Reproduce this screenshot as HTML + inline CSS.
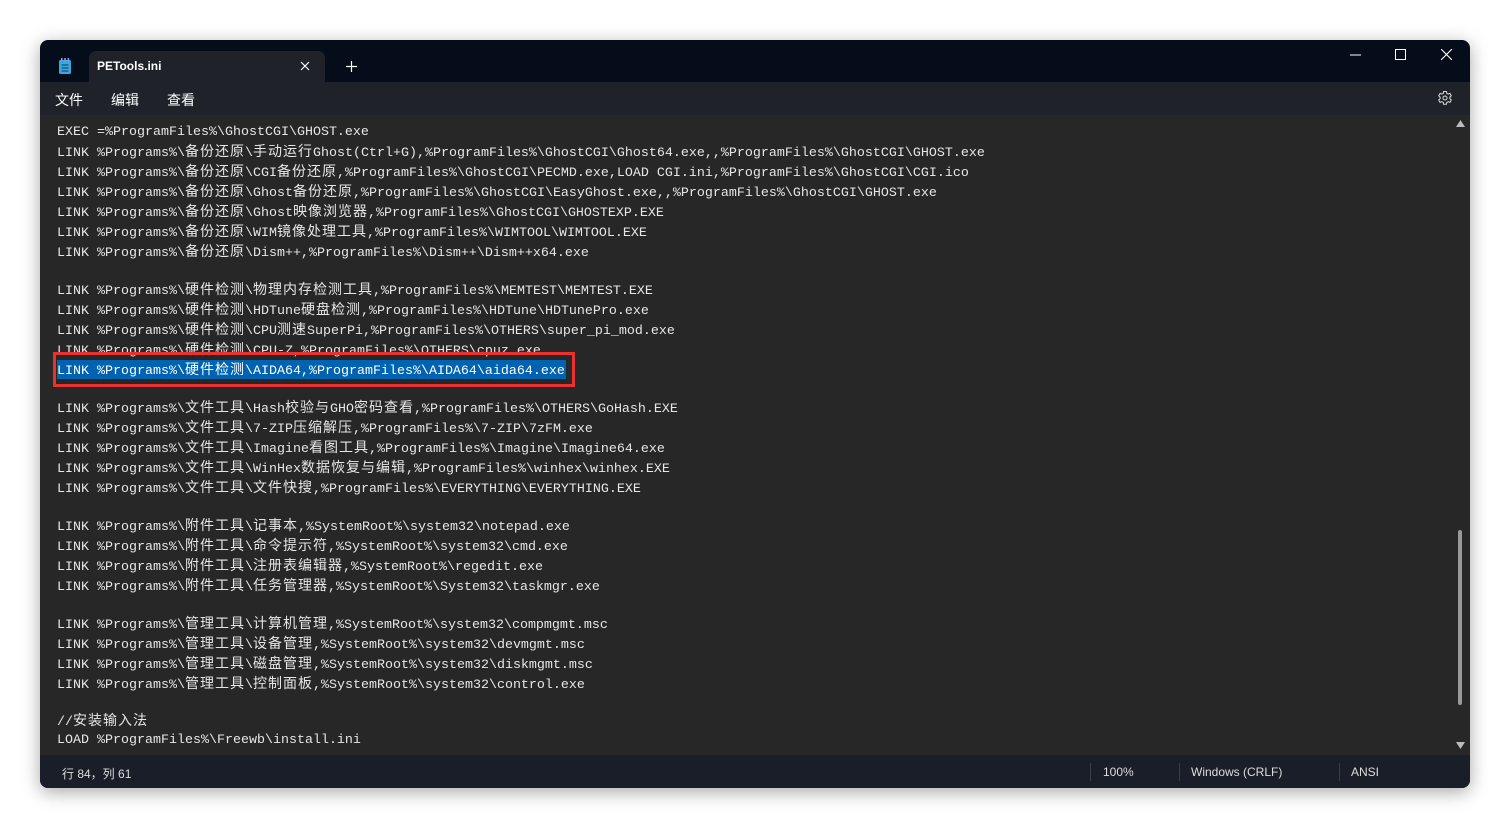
<!DOCTYPE html>
<html><head><meta charset="utf-8"><style>
*{margin:0;padding:0;box-sizing:border-box}
body{width:1510px;height:828px;background:#fff;position:relative;overflow:hidden;font-family:"Liberation Sans","Noto Sans CJK SC",sans-serif}
.win{position:absolute;left:40px;top:40px;width:1430px;height:748px;background:#050c1a;border-radius:8px;overflow:hidden;box-shadow:0 4px 18px rgba(0,0,0,.35)}
.tab{position:absolute;left:49px;top:11px;width:236px;height:31px;background:#1f2228;border-radius:7px 7px 0 0;color:#fff;font-size:12px;font-weight:bold}
.menu{position:absolute;left:0;top:42px;width:1430px;height:33px;background:#1f2228;color:#fff;font-size:14px}
.ed{position:absolute;left:0;top:75px;width:1430px;height:640px;background:#272727}
.status{position:absolute;left:0;top:715px;width:1430px;height:33px;background:#1a1e29;color:#ddd;font-size:12px}
.l{position:absolute;left:17px;height:20px;line-height:20px;font-family:"Liberation Mono",monospace;font-size:13.33px;color:#e6e6e6;white-space:pre}
.c{font-family:"Noto Sans CJK SC",sans-serif;font-size:14px;letter-spacing:1px}
.sep{position:absolute;top:8px;width:1px;height:18px;background:#3a3e48}
</style></head><body>
<div class="win">
 <svg style="position:absolute;left:18px;top:18px" width="14" height="17" viewBox="0 0 14 17"><rect x="1" y="2" width="12" height="14" rx="1.5" fill="#3aa7e0"/><rect x="3" y="0" width="1.5" height="3" fill="#8ad"/><rect x="6.3" y="0" width="1.5" height="3" fill="#8ad"/><rect x="9.6" y="0" width="1.5" height="3" fill="#8ad"/><path d="M3.5 7h7M3.5 10h7M3.5 13h7" stroke="#0b3a5c" stroke-width="1"/></svg>
 <div class="tab"><span style="position:absolute;left:8px;top:8px">PETools.ini</span>
  <svg style="position:absolute;left:211px;top:10px" width="10" height="10"><path d="M1 1L9 9M9 1L1 9" stroke="#fff" stroke-width="1.2"/></svg></div>
 <svg style="position:absolute;left:306px;top:21px" width="11" height="11"><path d="M5.5 0V11M0 5.5H11" stroke="#fff" stroke-width="1.2"/></svg>
 <svg style="position:absolute;left:1310px;top:14px" width="11" height="2"><path d="M0 1H11" stroke="#fff"/></svg>
 <svg style="position:absolute;left:1355px;top:9px" width="11" height="11"><rect x=".5" y=".5" width="10" height="10" fill="none" stroke="#fff"/></svg>
 <svg style="position:absolute;left:1401px;top:9px" width="11" height="11"><path d="M0 0L11 11M11 0L0 11" stroke="#fff" stroke-width="1.1"/></svg>
 <div class="menu">
  <span style="position:absolute;left:15px;top:8px">文件</span>
  <span style="position:absolute;left:71px;top:8px">编辑</span>
  <span style="position:absolute;left:127px;top:8px">查看</span>
  <svg style="position:absolute;left:1397px;top:8px" width="16" height="16" viewBox="0 0 16 16"><path d="M6.6 1.5h2.8l.4 1.9 1.3.7 1.8-.7 1.4 2.4-1.4 1.3v1.6l1.4 1.3-1.4 2.4-1.8-.7-1.3.7-.4 1.9H6.6l-.4-1.9-1.3-.7-1.8.7-1.4-2.4L3.1 8.7V7.1L1.7 5.8l1.4-2.4 1.8.7 1.3-.7z" fill="none" stroke="#ddd" stroke-width="1"/><circle cx="8" cy="8" r="2" fill="none" stroke="#ddd"/></svg>
 </div>
 <div class="ed">
  <div style="position:absolute;left:17px;top:245px;width:509px;height:19px;background:#0063b1"></div>
  <div class="l" style="top:8px">EXEC =%ProgramFiles%\GhostCGI\GHOST.exe</div>
  <div class="l" style="top:26px">LINK %Programs%\<span class="c">备份还原</span>\<span class="c">手动运行</span>Ghost(Ctrl+G),%ProgramFiles%\GhostCGI\Ghost64.exe,,%ProgramFiles%\GhostCGI\GHOST.exe</div>
  <div class="l" style="top:46px">LINK %Programs%\<span class="c">备份还原</span>\CGI<span class="c">备份还原</span>,%ProgramFiles%\GhostCGI\PECMD.exe,LOAD CGI.ini,%ProgramFiles%\GhostCGI\CGI.ico</div>
  <div class="l" style="top:66px">LINK %Programs%\<span class="c">备份还原</span>\Ghost<span class="c">备份还原</span>,%ProgramFiles%\GhostCGI\EasyGhost.exe,,%ProgramFiles%\GhostCGI\GHOST.exe</div>
  <div class="l" style="top:86px">LINK %Programs%\<span class="c">备份还原</span>\Ghost<span class="c">映像浏览器</span>,%ProgramFiles%\GhostCGI\GHOSTEXP.EXE</div>
  <div class="l" style="top:106px">LINK %Programs%\<span class="c">备份还原</span>\WIM<span class="c">镜像处理工具</span>,%ProgramFiles%\WIMTOOL\WIMTOOL.EXE</div>
  <div class="l" style="top:126px">LINK %Programs%\<span class="c">备份还原</span>\Dism++,%ProgramFiles%\Dism++\Dism++x64.exe</div>
  <div class="l" style="top:164px">LINK %Programs%\<span class="c">硬件检测</span>\<span class="c">物理内存检测工具</span>,%ProgramFiles%\MEMTEST\MEMTEST.EXE</div>
  <div class="l" style="top:184px">LINK %Programs%\<span class="c">硬件检测</span>\HDTune<span class="c">硬盘检测</span>,%ProgramFiles%\HDTune\HDTunePro.exe</div>
  <div class="l" style="top:204px">LINK %Programs%\<span class="c">硬件检测</span>\CPU<span class="c">测速</span>SuperPi,%ProgramFiles%\OTHERS\super_pi_mod.exe</div>
  <div class="l" style="top:224px">LINK %Programs%\<span class="c">硬件检测</span>\CPU-Z,%ProgramFiles%\OTHERS\cpuz.exe</div>
  <div class="l" style="top:244px;color:#fff">LINK %Programs%\<span class="c">硬件检测</span>\AIDA64,%ProgramFiles%\AIDA64\aida64.exe</div>
  <div class="l" style="top:282px">LINK %Programs%\<span class="c">文件工具</span>\Hash<span class="c">校验与</span>GHO<span class="c">密码查看</span>,%ProgramFiles%\OTHERS\GoHash.EXE</div>
  <div class="l" style="top:302px">LINK %Programs%\<span class="c">文件工具</span>\7-ZIP<span class="c">压缩解压</span>,%ProgramFiles%\7-ZIP\7zFM.exe</div>
  <div class="l" style="top:322px">LINK %Programs%\<span class="c">文件工具</span>\Imagine<span class="c">看图工具</span>,%ProgramFiles%\Imagine\Imagine64.exe</div>
  <div class="l" style="top:342px">LINK %Programs%\<span class="c">文件工具</span>\WinHex<span class="c">数据恢复与编辑</span>,%ProgramFiles%\winhex\winhex.EXE</div>
  <div class="l" style="top:362px">LINK %Programs%\<span class="c">文件工具</span>\<span class="c">文件快搜</span>,%ProgramFiles%\EVERYTHING\EVERYTHING.EXE</div>
  <div class="l" style="top:400px">LINK %Programs%\<span class="c">附件工具</span>\<span class="c">记事本</span>,%SystemRoot%\system32\notepad.exe</div>
  <div class="l" style="top:420px">LINK %Programs%\<span class="c">附件工具</span>\<span class="c">命令提示符</span>,%SystemRoot%\system32\cmd.exe</div>
  <div class="l" style="top:440px">LINK %Programs%\<span class="c">附件工具</span>\<span class="c">注册表编辑器</span>,%SystemRoot%\regedit.exe</div>
  <div class="l" style="top:460px">LINK %Programs%\<span class="c">附件工具</span>\<span class="c">任务管理器</span>,%SystemRoot%\System32\taskmgr.exe</div>
  <div class="l" style="top:498px">LINK %Programs%\<span class="c">管理工具</span>\<span class="c">计算机管理</span>,%SystemRoot%\system32\compmgmt.msc</div>
  <div class="l" style="top:518px">LINK %Programs%\<span class="c">管理工具</span>\<span class="c">设备管理</span>,%SystemRoot%\system32\devmgmt.msc</div>
  <div class="l" style="top:538px">LINK %Programs%\<span class="c">管理工具</span>\<span class="c">磁盘管理</span>,%SystemRoot%\system32\diskmgmt.msc</div>
  <div class="l" style="top:558px">LINK %Programs%\<span class="c">管理工具</span>\<span class="c">控制面板</span>,%SystemRoot%\system32\control.exe</div>
  <div class="l" style="top:595px">//<span class="c">安装输入法</span></div>
  <div class="l" style="top:616px">LOAD %ProgramFiles%\Freewb\install.ini</div>
  <div style="position:absolute;left:13px;top:237px;width:522px;height:35px;border:3px solid #e8322f"></div>
  <svg style="position:absolute;left:1416px;top:5px" width="9" height="7"><path d="M0 7L4.5 0L9 7z" fill="#bbb"/></svg>
  <div style="position:absolute;left:1418px;top:415px;width:4px;height:175px;background:#9a9a9a;border-radius:2px"></div>
  <svg style="position:absolute;left:1416px;top:627px" width="9" height="7"><path d="M0 0L4.5 7L9 0z" fill="#bbb"/></svg>
 </div>
 <div class="status">
  <span style="position:absolute;left:22px;top:10px">行 84，列 61</span>
  <div class="sep" style="left:1050px"></div><span style="position:absolute;left:1063px;top:10px">100%</span>
  <div class="sep" style="left:1139px"></div><span style="position:absolute;left:1151px;top:10px">Windows (CRLF)</span>
  <div class="sep" style="left:1299px"></div><span style="position:absolute;left:1311px;top:10px">ANSI</span>
 </div>
</div>
</body></html>
